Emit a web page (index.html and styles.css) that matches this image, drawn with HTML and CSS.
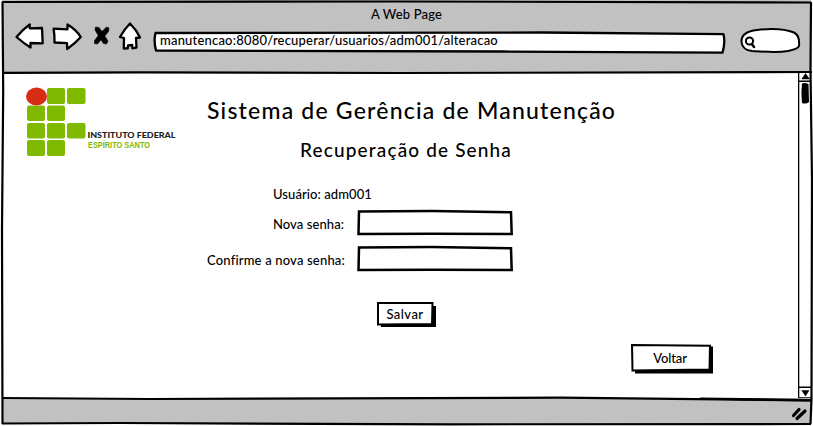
FILE: index.html
```html
<!DOCTYPE html>
<html lang="pt-BR">
<head>
<meta charset="utf-8">
<title>Recuperação de Senha</title>
<link rel="stylesheet" href="styles.css">
</head>
<body>
<div class="browser">
  <header class="chrome">
    <div class="window-title">A Web Page</div>
    <div class="toolbar">
      <svg class="nav-icons" width="130" height="32" viewBox="14 21 130 32">
        <g fill="#fff" stroke="#000" stroke-width="2.3" stroke-linejoin="round">
          <path d="M16.500 37Q22 30 29.700 24.500V28.300L42 28L42.700 43.300L30.500 43V47.500Q24 43.500 16.500 37Z"/>
          <path d="M80.800 37Q76 29.500 67.500 24.500V29.300L53.600 28.700Q54.800 35.500 54.500 42.500L67 43.200L67.200 49Q75 43.500 80.800 37Z"/>
          <path d="M130 23.500Q124.500 29 120 37L124 38L123.800 48.500L127.800 48.300L128 45.300L132.200 45L132.300 48.300L136.500 47.500L136 38L140 37.500Q136.500 30 130 23.500Z"/>
        </g>
        <path d="M95.500 27L99 27.500L102 31.500L106.500 27L109 28L108.500 31.500L104.800 36L108 41L106.500 44L103.500 43.500L101 39.800L97.500 44L94.500 43.500L94.500 40.500L98.300 35.500L95 30Z" stroke="#000" stroke-width=".6" stroke-linejoin="round"/>
      </svg>
      <div class="address">
        <svg class="sketch" viewBox="0 0 573 24">
          <path d="M2.500 3Q.5 11 3 20.500L350 21.500L569.500 22.700Q572.500 12 570.500 4.200L390 2.500Z" fill="#fff" stroke="#000" stroke-width="2.300" stroke-linejoin="round"/>
        </svg>
        <span class="url">manutencao:8080/recuperar/usuarios/adm001/alteracao</span>
      </div>
      <svg class="search" width="62" height="26" viewBox="740 28 62 26">
        <path d="M741.500 42C741 34 748 31 757 30C770 28.500 785 29 794 32.500C799 35 799.500 41 799 46C798 49 793 50 788 51C776 53 764 51.500 752 51C746 50.500 742 47 741.500 42Z" fill="#fff" stroke="#000" stroke-width="2"/>
        <circle cx="749.500" cy="41" r="3.600" fill="none" stroke="#000" stroke-width="2"/>
        <path d="M751.800 44L754 47" stroke="#000" stroke-width="2.400" stroke-linecap="round"/>
      </svg>
    </div>
  </header>

  <div class="viewport">
    <main class="page">
      <svg class="logo" width="152" height="72" viewBox="25 87 152 72">
        <g fill="#7fba00">
          <rect x="47" y="88" width="18" height="16" rx="2"/><rect x="67" y="88" width="18.500" height="16" rx="2"/>
          <rect x="27" y="105.500" width="18" height="15.500" rx="2"/><rect x="47" y="105.500" width="18" height="15.500" rx="2"/>
          <rect x="27" y="123" width="18" height="15.500" rx="2"/><rect x="47" y="123" width="18" height="15.500" rx="2"/><rect x="67" y="123" width="18.500" height="15.500" rx="2"/>
          <rect x="27" y="140" width="18" height="16" rx="2"/><rect x="47" y="140" width="18" height="16" rx="2"/>
        </g>
        <ellipse cx="36.500" cy="96.500" rx="10.500" ry="9" fill="#d72d12"/>
        <text class="logo-name" x="87.500" y="138" textLength="88" lengthAdjust="spacingAndGlyphs">INSTITUTO FEDERAL</text>
        <text class="logo-state" x="88" y="147.500" textLength="62" lengthAdjust="spacingAndGlyphs">ESPÍRITO SANTO</text>
      </svg>
      <section class="content">
        <h1>Sistema de Gerência de Manutenção</h1>
        <h2>Recuperação de Senha</h2>
        <form class="form">
          <p class="user">Usuário: adm001</p>
          <label class="label-new" for="nova">Nova senha:</label>
          <div class="field">
            <svg class="sketch" viewBox="0 0 157 28"><path d="M2 2.500L75 2L154 3.200L154.700 25L75 24.800L1.500 25Z" fill="#fff" stroke="#000" stroke-width="2.500"/></svg>
            <input id="nova" type="password">
          </div>
          <label class="label-confirm" for="confirma">Confirme a nova senha:</label>
          <div class="field">
            <svg class="sketch" viewBox="0 0 157 28"><path d="M2 2.500L75 2L154 3.200L154.700 25L75 24.800L1.500 25Z" fill="#fff" stroke="#000" stroke-width="2.500"/></svg>
            <input id="confirma" type="password">
          </div>
          <button class="btn save" type="button">
            <svg class="sketch" viewBox="0 0 60 27"><path d="M4 5H59V26H4Z"/><path d="M1 2L55.500 2L55 23L1 23.500Z" fill="#fff" stroke="#000" stroke-width="2"/></svg>
            <span>Salvar</span>
          </button>
          <button class="btn back" type="button">
            <svg class="sketch" viewBox="0 0 83 31"><path d="M4 4.500L82 3.500V30.500H4Z"/><path d="M1 2L79 2.700L78.500 26.500L1.500 27.500Z" fill="#fff" stroke="#000" stroke-width="2"/></svg>
            <span>Voltar</span>
          </button>
        </form>
      </section>
    </main>
    <div class="scrollbar">
      <svg width="14" height="328" viewBox="798 71 14 328">
        <path d="M798.500 71V399M798 81.300H811M798 387.300H811M798 398H811" stroke="#000" stroke-width="1.600" fill="none"/>
        <path d="M805.500 73.500L809.500 79H801.800ZM801.800 390.500H809L805.500 396Z" stroke="#000" stroke-width=".5"/>
        <path d="M802 83.500Q805 82.500 808.500 84L809 102Q806 104.500 802 103Q800.800 92 802 83.500Z"/>
      </svg>
    </div>
  </div>

  <footer class="statusbar"></footer>

  <svg class="frame" viewBox="0 0 813 426">
    <path d="M700 397.500L812 399V401.500L740 400.500L700 399Z" fill="#000"/>
    <g fill="none" stroke="#000" stroke-width="2.200">
      <path d="M2.500 2L400 1.500L811 2.500"/>
      <path d="M2.500 1.500L3.200 90L2 230L2.500 424"/>
      <path d="M811 2L810.500 71L812 180L811.500 399L810.500 424"/>
      <path d="M2 72.800L140 72.300L400 73L812 72"/>
      <path d="M2 398L150 399L560 397.700L812 400.500"/>
      <path d="M2 423.500L120 423L450 424.300L811 424"/>
    </g>
    <path d="M793.500 415.500L799 409.500M797 418.500L805 411" stroke="#000" stroke-width="3.200" stroke-linecap="round"/>
  </svg>
</div>
</body>
</html>
```
FILE: styles.css
```css
* { box-sizing: border-box; }

body {
  margin: 0;
  background: #fff;
  color: #000;
  font: 500 13px/20px Lato, "Liberation Sans", sans-serif;
}

.browser {
  position: relative;
  display: grid;
  grid-template-rows: 72px 326px 28px;
  width: 813px;
  height: 426px;
  overflow: hidden;
}

.chrome,
.statusbar {
  margin: 0 2px;
  background: #c1c1c1;
}

.statusbar { margin-bottom: 2px; }

.chrome { padding-top: 4px; }

.window-title {
  text-align: center;
  letter-spacing: .15px;
}

.toolbar {
  display: flex;
  align-items: flex-start;
  margin-left: 12px;
}

.nav-icons { margin-top: -3px; }

.address {
  position: relative;
  width: 573px;
  height: 24px;
  margin: 6px 0 0 9px;
  padding: 0 0 0 7px;
}

.search { margin: 4px 0 0 14px; }

.url {
  position: relative;
  letter-spacing: .2px;
}

.sketch {
  position: absolute;
  inset: 0;
  width: 100%;
  height: 100%;
}

.viewport { display: flex; }

.page {
  display: flex;
  flex: 1;
  align-items: flex-start;
  padding: 15px 0 0 25px;
}

.logo {
  flex: none;
  margin-right: 30px;
}

.logo-name {
  font: 900 7.5px Lato, sans-serif;
  fill: #222;
}

.logo-state {
  font: 700 9px "Liberation Sans", sans-serif;
  fill: #7fba00;
}

.content { padding-top: 8px; }

h1,
h2 {
  margin: 0;
  font-weight: 500;
  white-space: nowrap;
}

h1 {
  font-size: 23px;
  line-height: 30px;
  letter-spacing: 1.2px;
}

h2 {
  margin: 12px 0 0 93px;
  font-size: 19px;
  line-height: 26px;
  letter-spacing: 1.15px;
}

.form {
  display: grid;
  grid-template-columns: 150px 157px 117px 83px;
  grid-template-rows: 26px 28px 8px 28px 28px 27px 15px 31px;
  margin-top: 20px;
}

.user {
  grid-area: 1 / 1 / 2 / 3;
  margin: 1px 0 0 66px;
  letter-spacing: .08px;
}

.label-new {
  grid-area: 2 / 1;
  padding: 5px 0 0 66px;
  letter-spacing: .08px;
}

.label-confirm {
  grid-area: 4 / 1;
  padding-top: 5px;
  letter-spacing: .18px;
  white-space: nowrap;
}

.field {
  position: relative;
  grid-row: 2;
  grid-column: 2;
}

.label-confirm + .field { grid-row: 4; }

.field input {
  position: relative;
  width: 100%;
  height: 100%;
  padding: 0 8px;
  border: 0;
  outline: 0;
  background: transparent;
  font: inherit;
}

.btn {
  position: relative;
  padding: 0;
  border: 0;
  background: none;
  color: inherit;
  font: inherit;
}

.btn span { position: relative; }

.save {
  grid-area: 6 / 2;
  width: 60px;
  margin-left: 20px;
  padding: 0 4px 1px 0;
  letter-spacing: .45px;
}

.back {
  grid-area: 8 / 4;
  padding: 0 5px 2px 0;
  letter-spacing: -.1px;
}

.scrollbar {
  width: 15px;
  margin-top: -1px;
}

.frame {
  position: absolute;
  inset: 0;
  width: 813px;
  height: 426px;
  pointer-events: none;
}
```
